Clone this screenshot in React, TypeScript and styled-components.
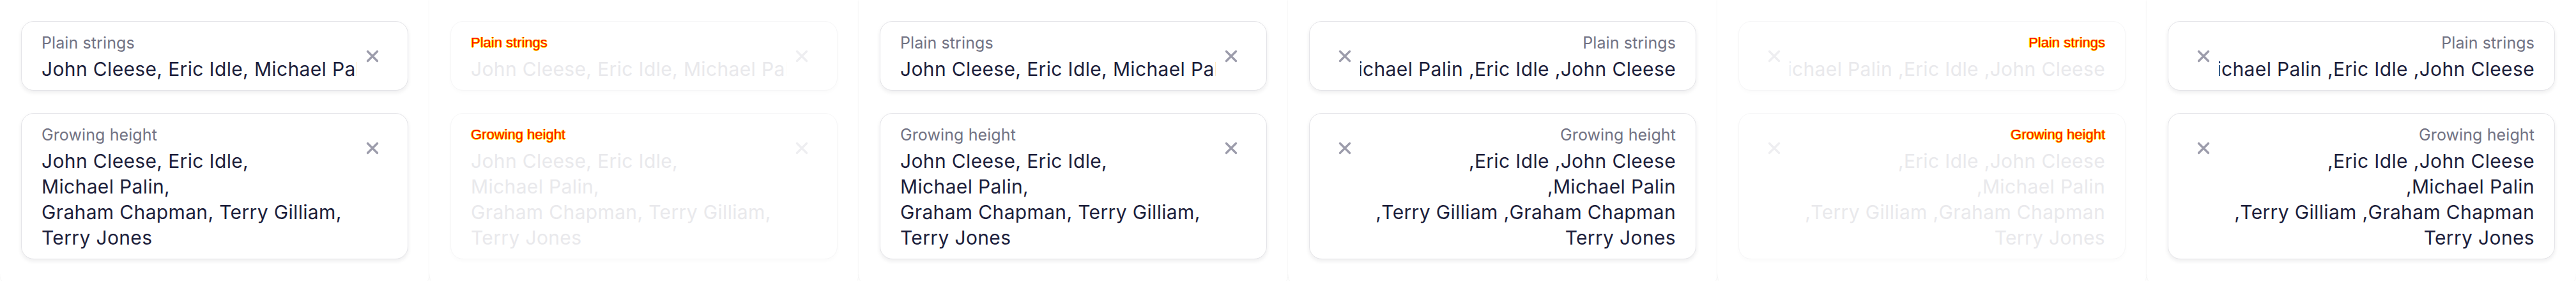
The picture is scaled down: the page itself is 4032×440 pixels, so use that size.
import React from 'react'
import styled, { createGlobalStyle, css } from 'styled-components'

const GlobalStyle = createGlobalStyle`
  html, body {
    margin: 0;
    padding: 0;
    background: #ffffff;
    overflow: hidden;
  }
  body {
    font-family: Inter, "Noto Sans", sans-serif;
  }
`

const NAMES = ['John Cleese', 'Eric Idle', 'Michael Palin', 'Graham Chapman', 'Terry Gilliam', 'Terry Jones']
// how many names go on each line of the growing field
const LINE_SPLIT = [2, 1, 2, 1]

type Variant = { dir: 'ltr' | 'rtl'; disabled: boolean }

const variants: Variant[] = [
  { dir: 'ltr', disabled: false },
  { dir: 'ltr', disabled: true },
  { dir: 'ltr', disabled: false },
  { dir: 'rtl', disabled: false },
  { dir: 'rtl', disabled: true },
  { dir: 'rtl', disabled: false },
]

function toLines(names: string[], split: number[]) {
  const lines: string[][] = []
  let i = 0
  for (const n of split) {
    lines.push(names.slice(i, i + n))
    i += n
  }
  return lines
}

export default function App() {
  return (
    <>
      <GlobalStyle />
      <Page>
        {variants.map((v, i) => (
          <Panel key={i} dir={v.dir}>
            <Field label="Plain strings" lines={[NAMES]} disabled={v.disabled} />
            <Field label="Growing height" lines={toLines(NAMES, LINE_SPLIT)} disabled={v.disabled} multiline />
          </Panel>
        ))}
      </Page>
    </>
  )
}

function Field({
  label,
  lines,
  disabled,
  multiline = false,
}: {
  label: string
  lines: string[][]
  disabled: boolean
  multiline?: boolean
}) {
  const total = lines.reduce((s, l) => s + l.length, 0)
  let idx = 0
  return (
    <Card $disabled={disabled}>
      <Content>
        <Label $disabled={disabled}>{label}</Label>
        <Value $disabled={disabled} $multiline={multiline}>
          {lines.map((line, li) => (
            <Line key={li}>
              {line.map((name, ni) => {
                idx += 1
                const text = idx < total ? `${name},` : name
                return (
                  <React.Fragment key={ni}>
                    {ni > 0 && ' '}
                    <Item>{text}</Item>
                  </React.Fragment>
                )
              })}
            </Line>
          ))}
        </Value>
      </Content>
      <ClearButton type="button" aria-label="Clear" $disabled={disabled}>
        <svg width="22" height="22" viewBox="0 0 22 22" fill="none">
          <path
            d="M3.5 3.5 L18.5 18.5 M18.5 3.5 L3.5 18.5"
            stroke="currentColor"
            strokeWidth="3.4"
            strokeLinecap="round"
          />
        </svg>
      </ClearButton>
    </Card>
  )
}

const Page = styled.main`
  display: grid;
  grid-template-columns: repeat(6, 672px);
  height: 440px;
`

const Panel = styled.section`
  height: 452px;
  box-sizing: border-box;
  padding: 33px;
  display: flex;
  flex-direction: column;
  gap: 35px;
  background: #ffffff;
  border-radius: 0 0 24px 24px;
  box-shadow: 0 0 3px rgba(0, 0, 0, 0.08);
`

const Card = styled.div<{ $disabled: boolean }>`
  display: flex;
  align-items: flex-start;
  gap: 4px;
  padding: 17px 35px 13px 31px;
  border-radius: 20px;
  background: #ffffff;
  border: 1px solid #e4e4e8;
  box-shadow: 0 3px 6px rgba(20, 20, 40, 0.08);
  [dir='rtl'] & {
    padding: 17px 31px 13px 35px;
  }
  ${(p) =>
    p.$disabled &&
    css`
      border-color: #f6f6f7;
      box-shadow: 0 3px 6px rgba(20, 20, 40, 0.02);
    `}
`

const Content = styled.div`
  flex: 1;
  min-width: 0;
  display: flex;
  flex-direction: column;
  gap: 5px;
`

const Label = styled.div<{ $disabled: boolean }>`
  font-size: 25px;
  line-height: 32px;
  color: #717283;
  letter-spacing: 0.1px;
  ${(p) =>
    p.$disabled &&
    css`
      color: #ff1000;
      font-family: 'Liberation Sans', Arial, sans-serif;
      font-size: 22px;
      letter-spacing: 0;
      text-shadow: 1px 0 0 #ffee00, -1px 0 0 #ffee00, 0 1px 0 #ffee00;
    `}
`

const Value = styled.div<{ $disabled: boolean; $multiline: boolean }>`
  font-size: 30px;
  line-height: 40px;
  color: ${(p) => (p.$disabled ? '#e9e9ec' : '#1c1e3b')};
  letter-spacing: 0.35px;
  overflow: hidden;
  white-space: ${(p) => (p.$multiline ? 'pre' : 'nowrap')};
`

const Line = styled.div``

const Item = styled.span`
  unicode-bidi: isolate;
`

const ClearButton = styled.button<{ $disabled: boolean }>`
  flex: none;
  width: 40px;
  height: 40px;
  margin-top: 17px;
  padding: 0;
  border: none;
  background: none;
  display: flex;
  align-items: center;
  justify-content: center;
  color: ${(p) => (p.$disabled ? '#eeeef1' : '#9c9cab')};
`
